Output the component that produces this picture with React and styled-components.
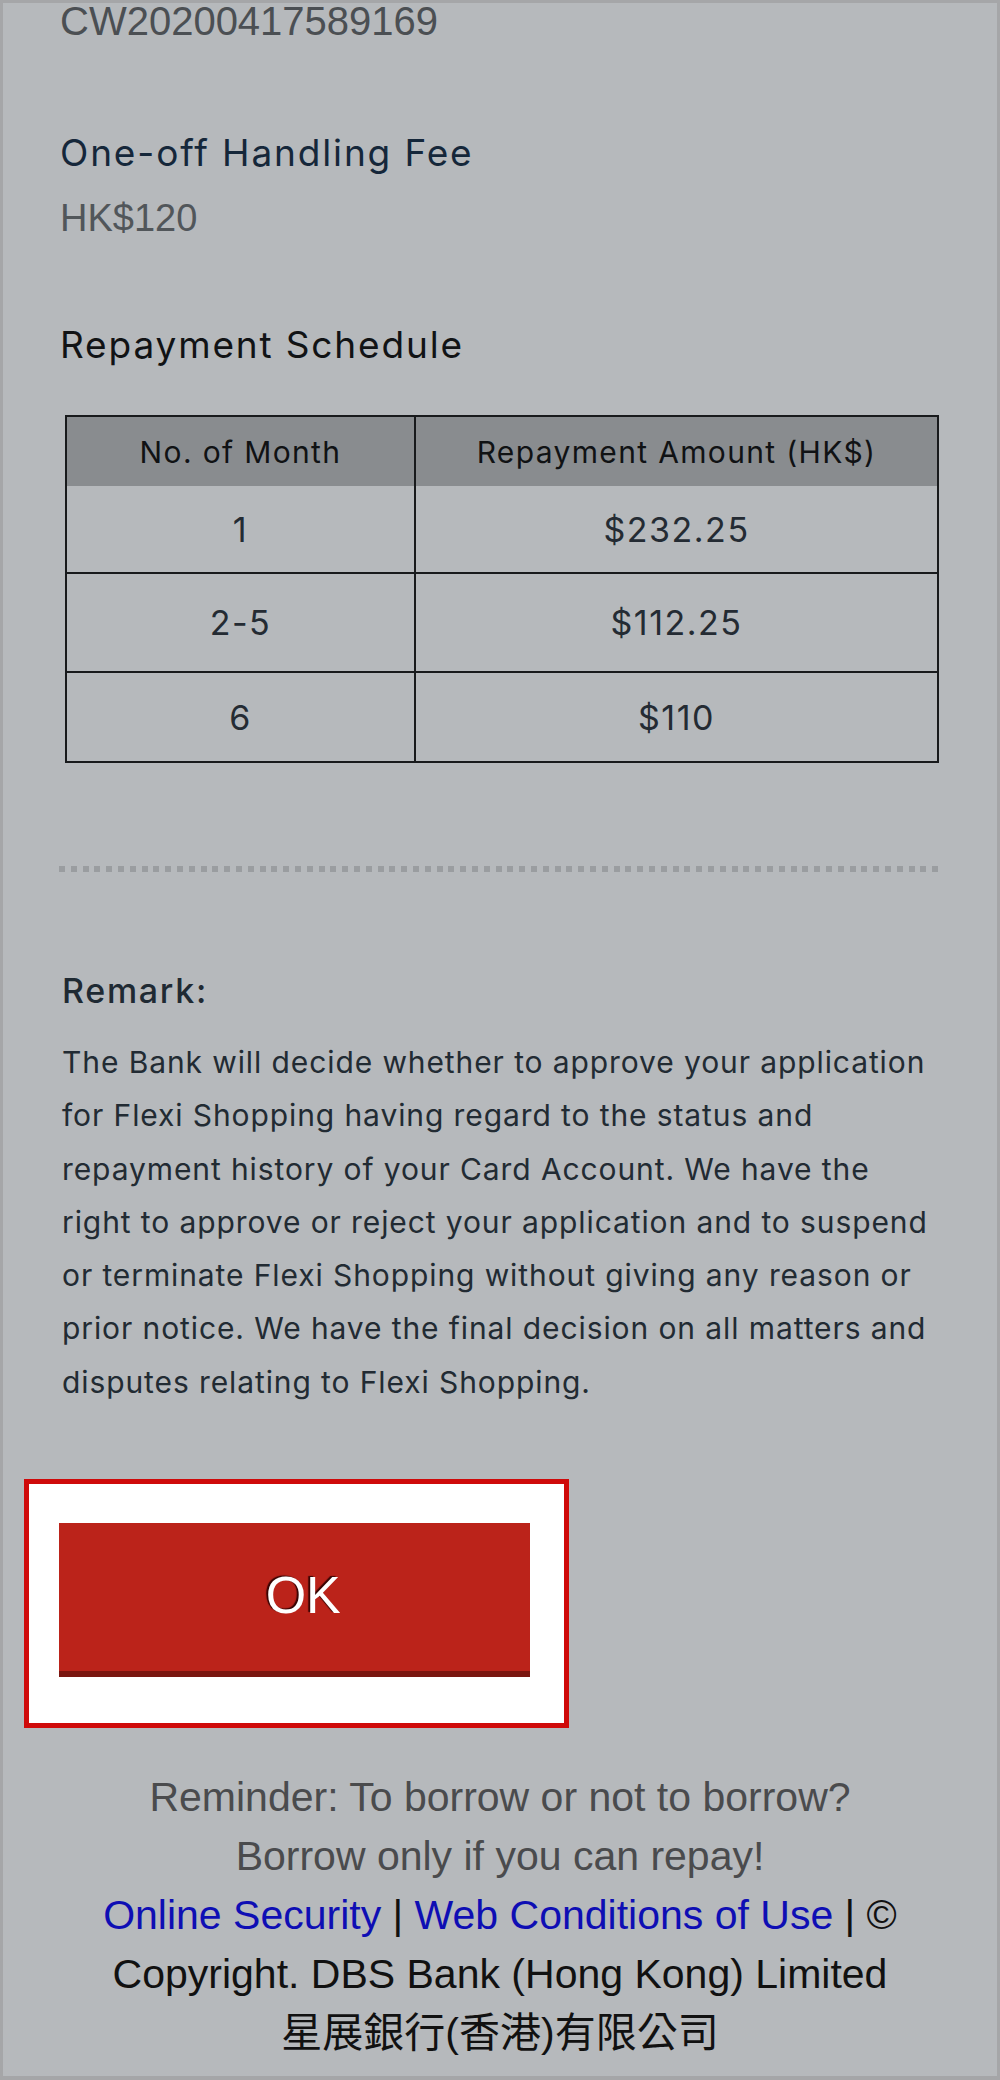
import React from "react";
import styled, { createGlobalStyle } from "styled-components";

const GlobalStyle = createGlobalStyle`
  html, body {
    margin: 0;
    padding: 0;
    background: #b6b9bc;
  }
  * { box-sizing: border-box; }
`;

const Page = styled.div`
  width: 1000px;
  height: 2080px;
  overflow: hidden;
  background: #b6b9bc;
  border-style: solid;
  border-color: #a5a6a8;
  border-width: 3px 3px 4px 3px;
  font-family: Inter, "Noto Sans", sans-serif;
`;

const Content = styled.div`
  padding: 0 57px;
`;

const RefNumber = styled.div`
  margin-top: -4px;
  font-family: "Liberation Sans", Arial, sans-serif;
  font-size: 40px;
  line-height: 44px;
  color: #4b4f53;
`;

const FieldLabel = styled.div`
  margin-top: ${(p) => p.$mt}px;
  font-size: 37px;
  letter-spacing: 0.05em;
  line-height: 44px;
  color: ${(p) => p.$color || "#15273a"};
`;

const FieldValue = styled.div`
  margin-top: 21px;
  font-family: "Liberation Sans", Arial, sans-serif;
  font-size: 38px;
  line-height: 44px;
  color: #51565a;
`;

const Table = styled.div`
  margin: 48px 0 0 5px;
  width: 874px;
  border: 2px solid #181a1c;
  display: grid;
  grid-template-columns: 349px 1fr;
`;

const Cell = styled.div`
  height: ${(p) => p.$h}px;
  display: flex;
  align-items: center;
  justify-content: center;
  border-right: ${(p) => (p.$first ? "2px solid #181a1c" : "none")};
  border-bottom: ${(p) => (p.$lineBelow ? "2px solid #181a1c" : "none")};
  background: ${(p) => (p.$head ? "#898c8f" : "transparent")};
  font-size: ${(p) => (p.$head ? 30 : 34)}px;
  letter-spacing: 0.045em;
  color: ${(p) => (p.$head ? "#101214" : "#242b33")};
  box-sizing: content-box;
`;

const Divider = styled.div`
  margin: 103px 0 0 -1px;
  width: 884px;
  height: 6px;
  background: repeating-linear-gradient(
    to right,
    #9a9da0 0px,
    #9a9da0 6px,
    transparent 6px,
    transparent 11.8px
  );
`;

const RemarkTitle = styled.div`
  margin: 97px 0 0 2px;
  font-size: 34px;
  font-weight: 500;
  letter-spacing: 0.05em;
  line-height: 44px;
  color: #1f2a33;
`;

const RemarkText = styled.p`
  margin: 23px 0 0 2px;
  width: 876px;
  font-size: 30px;
  letter-spacing: 0.03em;
  line-height: 53.3px;
  color: #222b33;
`;

const ActionArea = styled.div`
  margin-top: 70px;
  padding-left: 21px;
`;

const HighlightBox = styled.div`
  display: inline-block;
  border: 5px solid #cf0a0a;
  background: #ffffff;
  padding: 39px 34px 46px 29.5px;
`;

const OkButton = styled.button`
  display: flex;
  align-items: center;
  justify-content: center;
  width: 471.5px;
  height: 154px;
  padding: 0 0 4px 18px;
  margin: 0;
  border: none;
  border-bottom: 6px solid #7a1610;
  background: #bb231a;
  color: #ffffff;
  font-family: "Liberation Sans", Arial, sans-serif;
  font-size: 52px;
  text-shadow: -2px -1px 1px rgba(40, 0, 0, 0.9);
  cursor: pointer;
`;

const Footer = styled.div`
  margin-top: 40px;
  padding: 0 40px;
  text-align: center;
  font-family: "Liberation Sans", Arial, "Noto Sans CJK TC", sans-serif;
  font-size: 41px;
  line-height: 59px;
  color: #111111;
`;

const Reminder = styled.div`
  color: #4a4b4d;
`;

const FooterLink = styled.a`
  color: #0e0eb4;
  text-decoration: none;
`;

const Nowrap = styled.span`
  white-space: nowrap;
`;

const rows = [
  { month: "1", amount: "$232.25", h: 86, line: true },
  { month: "2-5", amount: "$112.25", h: 97, line: true },
  { month: "6", amount: "$110", h: 88, line: false },
];

export default function App() {
  return (
    <>
      <GlobalStyle />
      <Page>
        <Content>
          <RefNumber>CW20200417589169</RefNumber>
          <FieldLabel $mt={88}>One-off Handling Fee</FieldLabel>
          <FieldValue>HK$120</FieldValue>
          <FieldLabel $mt={83} $color="#111315">
            Repayment Schedule
          </FieldLabel>
          <Table>
            <Cell $head $first $h={69}>
              No. of Month
            </Cell>
            <Cell $head $h={69}>
              Repayment Amount (HK$)
            </Cell>
            {rows.map((r) => (
              <React.Fragment key={r.month}>
                <Cell $first $lineBelow={r.line} $h={r.h}>
                  {r.month}
                </Cell>
                <Cell $lineBelow={r.line} $h={r.h}>
                  {r.amount}
                </Cell>
              </React.Fragment>
            ))}
          </Table>
          <Divider />
          <RemarkTitle>Remark:</RemarkTitle>
          <RemarkText>
            The Bank will decide whether to approve your application for Flexi
            Shopping having regard to the status and repayment history of your
            Card Account. We have the right to approve or reject your
            application and to suspend or terminate Flexi Shopping without
            giving any reason or prior notice. We have the final decision on
            all matters and disputes relating to Flexi Shopping.
          </RemarkText>
        </Content>
        <ActionArea>
          <HighlightBox>
            <OkButton type="button">OK</OkButton>
          </HighlightBox>
        </ActionArea>
        <Footer>
          <Reminder>Reminder: To borrow or not to borrow?</Reminder>
          <Reminder>Borrow only if you can repay!</Reminder>
          <div>
            <FooterLink href="#">Online Security</FooterLink> |{" "}
            <FooterLink href="#">Web Conditions of Use</FooterLink> | ©
            Copyright. DBS Bank (Hong Kong) Limited{" "}
            <Nowrap>星展銀行(香港)有限公司</Nowrap>
          </div>
        </Footer>
      </Page>
    </>
  );
}
